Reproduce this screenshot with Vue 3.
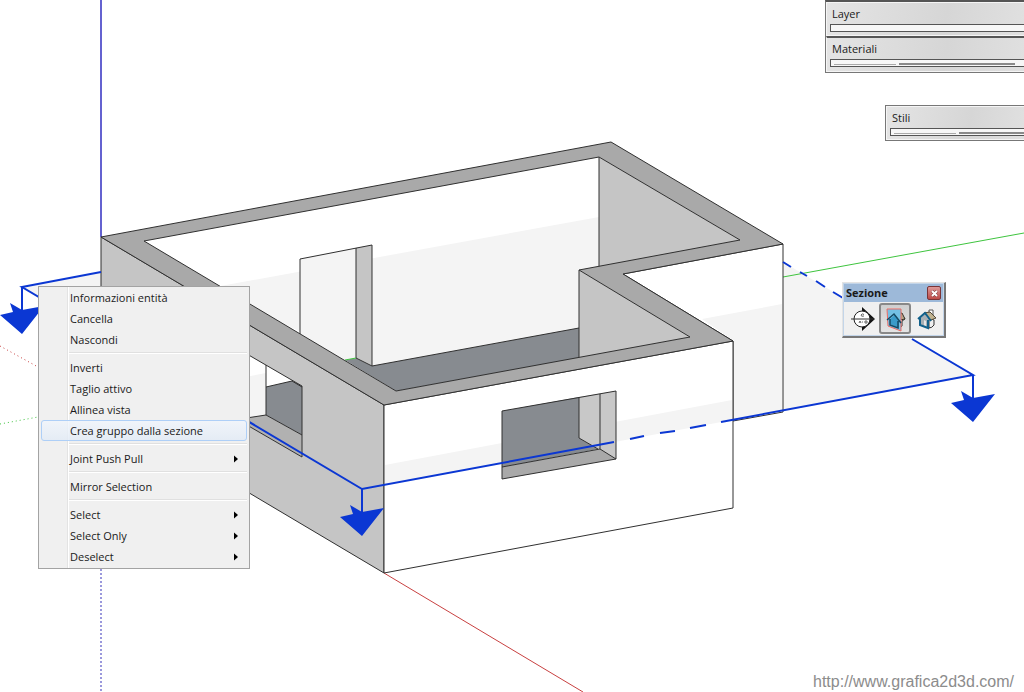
<script setup>
const menuGroups = [
  [{ label: 'Informazioni entità' }, { label: 'Cancella' }, { label: 'Nascondi' }],
  [
    { label: 'Inverti' },
    { label: 'Taglio attivo' },
    { label: 'Allinea vista' },
    { label: 'Crea gruppo dalla sezione', active: true },
  ],
  [{ label: 'Joint Push Pull', submenu: true }],
  [{ label: 'Mirror Selection' }],
  [
    { label: 'Select', submenu: true },
    { label: 'Select Only', submenu: true },
    { label: 'Deselect', submenu: true },
  ],
]

// Anchor corners of the section plane, each carrying a direction arrow
const arrows = [
  { x: 22, y: 287 },
  { x: 362, y: 489 },
  { x: 973, y: 375 },
]
</script>

<template>
  <main class="viewport">
    <svg class="scene" viewBox="0 0 1024 692" role="img" aria-label="Modello">
      <!-- axes -->
      <g class="axis">
        <path class="blue" d="M101 0V237" />
        <path class="blue dots" d="M101 569V692" />
        <path class="green dots" d="M0 424L38 417" />
        <path class="red dots" d="M0 346L38 367" />
        <path class="red" d="M384 573L583 692" />
      </g>

      <!-- section plane outside the walls -->
      <path class="plane" d="M22 287L101 272V334ZM783 262L973 375L733 420V300Z" />
      <path class="axis green" d="M783 277L1024 233" />

      <!-- interior -->
      <path fill="#fff" d="M144 241L599 157L740 240L579 270L690 337L396 391Z" />
      <path class="plane" d="M215 287L599 217V328L372 366L280 322Z" />
      <path class="shade" d="M599 157L740 240L599 267Z" />
      <path class="floor" d="M345 360L356 358L372 366L579 328V358L396 391Z" />
      <path class="shade" d="M579 270L690 337L579 358Z" />
      <path class="plane" d="M300 259L356 248V358L345 360L300 334Z" />
      <path class="shade" d="M356 248L372 245V366L356 358Z" />
      <path class="edge" d="M599 157V267M579 270V358M300 334V259L372 245V366L356 358V248M372 366L579 328" />
      <path class="axis green" d="M345 360L356 358" />

      <!-- outer walls -->
      <path class="shade edge" d="M101 237L384 405V573L101 405Z" />
      <path class="edge" fill="#fff" d="M623 274L783 244V412L733 421V341Z" />
      <path class="plane" d="M702 319L782 304V411L734 420V341Z" />
      <path class="edge" fill="#fff" d="M384 405L733 341V508L384 573Z" />
      <path class="plane" d="M385 465L732 400V420L385 485Z" />

      <!-- wall tops -->
      <path
        class="top edge"
        fill-rule="evenodd"
        d="M101 237L611 142L783 244L623 274L733 341L384 405ZM144 241L599 157L740 240L579 270L690 337L396 391Z"
      />

      <!-- left window -->
      <path fill="#fff" d="M240 350L302 386V457L240 421Z" />
      <path class="plane" d="M240 378L266 373V415L240 419Z" />
      <path class="floor" d="M266 387L292 381L302 386V435L266 415Z" />
      <path fill="#b1b1b1" d="M240 419L266 415L302 435V457L240 421Z" />
      <path class="edge" d="M240 350L302 386V457L240 421M240 419L266 415L302 435M266 365V415M266 387L292 381L302 387" />

      <!-- front window -->
      <path class="floor" d="M502 411L579 397V438L598 449L502 467Z" />
      <path fill="#c8c8c8" d="M579 397L616 391V459L579 438Z" />
      <path class="top" d="M502 467L600 449L616 459L502 479Z" />
      <path class="edge" d="M502 411L616 391V459L502 479ZM579 397V438L598 449M600 394V449L616 459M502 467L600 449" />

      <!-- section outline -->
      <g class="cut">
        <path d="M101 272L22 287L362 489L614 442" />
        <path
          d="M630 439L644 436M660 433L675 431M690 428L706 425M721 422L973 375L912 339M783 262L791 267M800 272L807 276M816 281L825 287M833 292L843 298"
        />
        <g v-for="a in arrows" :key="a.x" :transform="`translate(${a.x} ${a.y})`">
          <path d="M0 0V24" />
          <path class="head" d="M-12 16L0 23L22 19L0 47L-22 28L-9 25Z" />
        </g>
      </g>
    </svg>

    <section class="dock dock-top">
      <div class="tray">
        <span>Layer</span>
        <div class="slot"></div>
      </div>
      <div class="tray">
        <span>Materiali</span>
        <div class="slot"><i class="thin"></i><i class="thick"></i></div>
      </div>
    </section>

    <section class="dock dock-styles">
      <div class="tray">
        <span>Stili</span>
        <div class="slot"><i class="thin"></i><i class="thick wide"></i></div>
      </div>
    </section>

    <nav class="menu">
      <div v-for="(group, g) in menuGroups" :key="g" class="group">
        <button
          v-for="item in group"
          :key="item.label"
          type="button"
          :class="['item', { active: item.active }]"
        >
          <span>{{ item.label }}</span>
          <svg v-if="item.submenu" width="4" height="8" viewBox="0 0 4 8" aria-hidden="true">
            <path d="M0 0.5L4 4L0 7.5Z" />
          </svg>
        </button>
      </div>
    </nav>

    <section class="toolbar">
      <header>
        <h2>Sezione</h2>
        <button class="close" type="button" aria-label="Chiudi">
          <svg width="7" height="7" viewBox="0 0 7 7">
            <path d="M1 1L6 6M6 1L1 6" stroke="#7b3437" stroke-width="3" />
            <path d="M1 1L6 6M6 1L1 6" stroke="#fff" stroke-width="2" />
          </svg>
        </button>
      </header>
      <div class="tools">
        <button class="tool" type="button" aria-label="Piano di sezione">
          <svg width="26" height="26" viewBox="0 0 26 26">
            <path d="M12 1L25 13L12 25V20L19 13L12 6Z" fill="#111" />
            <circle cx="12" cy="13" r="8" fill="#fff" stroke="#222" />
            <path d="M1 13H24" stroke="#333" />
            <path d="M14 8.500Q12 7 11 9Q11 11 14 10M9 17L10 15L11 17M12 16H13M15 15V17H17V15Z" fill="none" stroke="#666" />
          </svg>
        </button>
        <button class="tool pressed" type="button" aria-label="Mostra piani di sezione">
          <svg width="26" height="26" viewBox="0 0 26 26">
            <path d="M15 7L20 9L23 13L20 15V20L15 23Z" fill="#eee" stroke="#333" />
            <path d="M16 8L20 7L23 13L18 14Z" fill="#b5a78b" stroke="#3c342c" />
            <path d="M5 3L19 3V25L6 20Z" fill="#74c0e4" stroke="#ef6b62" />
            <path d="M8 13L13 9L17 15V22L8 18Z" fill="#3a9bc9" />
            <path d="M5 14L12 8L19 17M8 13V19L16 22V15" fill="none" stroke="#154963" stroke-width="1.500" />
          </svg>
        </button>
        <button class="tool" type="button" aria-label="Mostra tagli di sezione">
          <svg width="26" height="26" viewBox="0 0 26 26">
            <path d="M15 12L20 14V19Q18 22 15 22Z" fill="#eee" stroke="#333" />
            <path d="M15 4H19V9H15Z" fill="#fff" stroke="#555" />
            <path d="M10 7L16 6L22 12L17 14Z" fill="#c0b28f" stroke="#514736" />
            <path d="M6 12L11 8L15 14V22L6 18Z" fill="#a9b0b5" />
            <path d="M4 13L11 7L17 15M6 12V19L14 22V14" fill="none" stroke="#12618b" stroke-width="2" />
            <path d="M10 19V14L12 15V20Z" fill="#e5e5e5" />
          </svg>
        </button>
      </div>
    </section>

    <a class="credit" href="#">http://www.grafica2d3d.com/</a>
  </main>
</template>

<style>
body {
  background: #fff;
}
</style>

<style scoped>
.viewport {
  position: relative;
  min-height: 100vh;
  overflow: hidden;
  font-family: "Open Sans", "Noto Sans", sans-serif;
  font-size: 11px;
  color: #1a1a1a;
}
.scene {
  display: block;
  width: 100%;
}
.axis {
  fill: none;
}
.blue { stroke: #6462d0; stroke-width: 2; }
.green { stroke: #3fc43f; }
.red { stroke: #c84040; }
.dots { stroke-dasharray: 1 3; }
.blue.dots { stroke-dasharray: 2 2; stroke: #9a98dc; }
.plane { fill: #f4f4f4; }
.shade { fill: #c5c5c5; }
.floor { fill: #878b90; }
.top { fill: #a9a9a9; }
.edge {
  stroke: #303030;
  stroke-width: 1;
}
.edge:not([fill]):not(.shade):not(.top) {
  fill: none;
}
.cut {
  fill: none;
  stroke: #0b37d3;
  stroke-width: 2;
}
.head {
  fill: #0b37d3;
  stroke: none;
}

button {
  margin: 0;
  padding: 0;
  border: 0;
  background: none;
  font: inherit;
  color: inherit;
}

.dock {
  position: absolute;
  right: 0;
  box-sizing: border-box;
  border: 1px solid #777;
  border-right: 0;
}
.dock-top {
  top: 0;
  width: 199px;
  border-top: 2px solid #555;
}
.dock-styles {
  top: 105px;
  width: 139px;
}
.tray {
  box-sizing: border-box;
  height: 34px;
  padding: 3px 0 0 3px;
  border: 1px solid #f5f5f5;
  border-right: 0;
  background: linear-gradient(100deg, #e4e4e4, #d6d6d6 60%, #e0e0e0);
}
.tray + .tray {
  height: 36px;
  border-top: 2px solid #555;
}
.tray span {
  display: block;
  padding-left: 2px;
  line-height: 16px;
}
.slot {
  display: flex;
  align-items: flex-end;
  gap: 3px;
  box-sizing: border-box;
  height: 8px;
  margin-top: 2px;
  padding: 0 0 1px 3px;
  border: 1px solid #555;
  border-right: 0;
  background: #f7f7f7;
}
.thin {
  width: 62px;
  height: 1px;
  background: #aaa;
}
.thick {
  flex: 1;
  height: 2px;
  margin-right: 9px;
  background: #8a8a8a;
}
.wide {
  margin-right: 0;
}

.menu {
  position: absolute;
  top: 286px;
  left: 38px;
  box-sizing: border-box;
  width: 212px;
  padding: 0 2px 1px;
  border: 1px solid #a3a3a3;
  background: linear-gradient(90deg, #f0f0f0 28px, #e3e3e3 28px, #e3e3e3 29px, #fff 29px, #fff 30px, #f0f0f0 30px);
}
.group + .group::before {
  content: "";
  display: block;
  height: 1px;
  margin: 2px 0 3px 28px;
  border-bottom: 1px solid #fff;
  background: #e0e0e0;
}
.item {
  display: flex;
  align-items: center;
  justify-content: space-between;
  box-sizing: border-box;
  width: 100%;
  height: 21px;
  padding: 0 8px 0 28px;
  border: 1px solid transparent;
  border-radius: 3px;
  text-align: left;
}
.item.active {
  border-color: #aecff7;
  background: linear-gradient(rgba(240, 245, 252, 0.8), rgba(226, 235, 246, 0.8));
}

.toolbar {
  position: absolute;
  top: 282px;
  left: 842px;
  box-sizing: border-box;
  width: 104px;
  padding: 1px;
  border: 1px solid #e3e3e3;
  border-right: 2px solid #777;
  border-bottom: 2px solid #777;
  background: #c3d5e9;
}
.toolbar header {
  display: flex;
  align-items: center;
  justify-content: space-between;
  height: 18px;
  padding: 0 2px;
  background: #9db9d9;
}
.toolbar h2 {
  margin: 0;
  font-size: 11px;
  font-weight: 700;
  line-height: 18px;
}
.close {
  display: grid;
  place-items: center;
  box-sizing: border-box;
  width: 14px;
  height: 14px;
  border: 1px solid #7b3437;
  border-radius: 2px;
  background: linear-gradient(#d99, #bd4b48);
}
.tools {
  display: flex;
  align-items: center;
  justify-content: space-between;
  height: 33px;
  padding: 0 0 0 3px;
  background: #f0f0f0;
}
.tool {
  display: grid;
  place-items: center;
  box-sizing: border-box;
  width: 32px;
  height: 31px;
}
.pressed {
  border: 2px solid #888;
  border-radius: 3px;
  background: linear-gradient(#cfcfcf, #e4e4e4);
}

.credit {
  position: absolute;
  right: 10px;
  bottom: 0;
  font-family: "Liberation Sans", Arial, sans-serif;
  font-size: 16px;
  line-height: 20px;
  color: #8c8c8c;
  text-decoration: none;
}
</style>
